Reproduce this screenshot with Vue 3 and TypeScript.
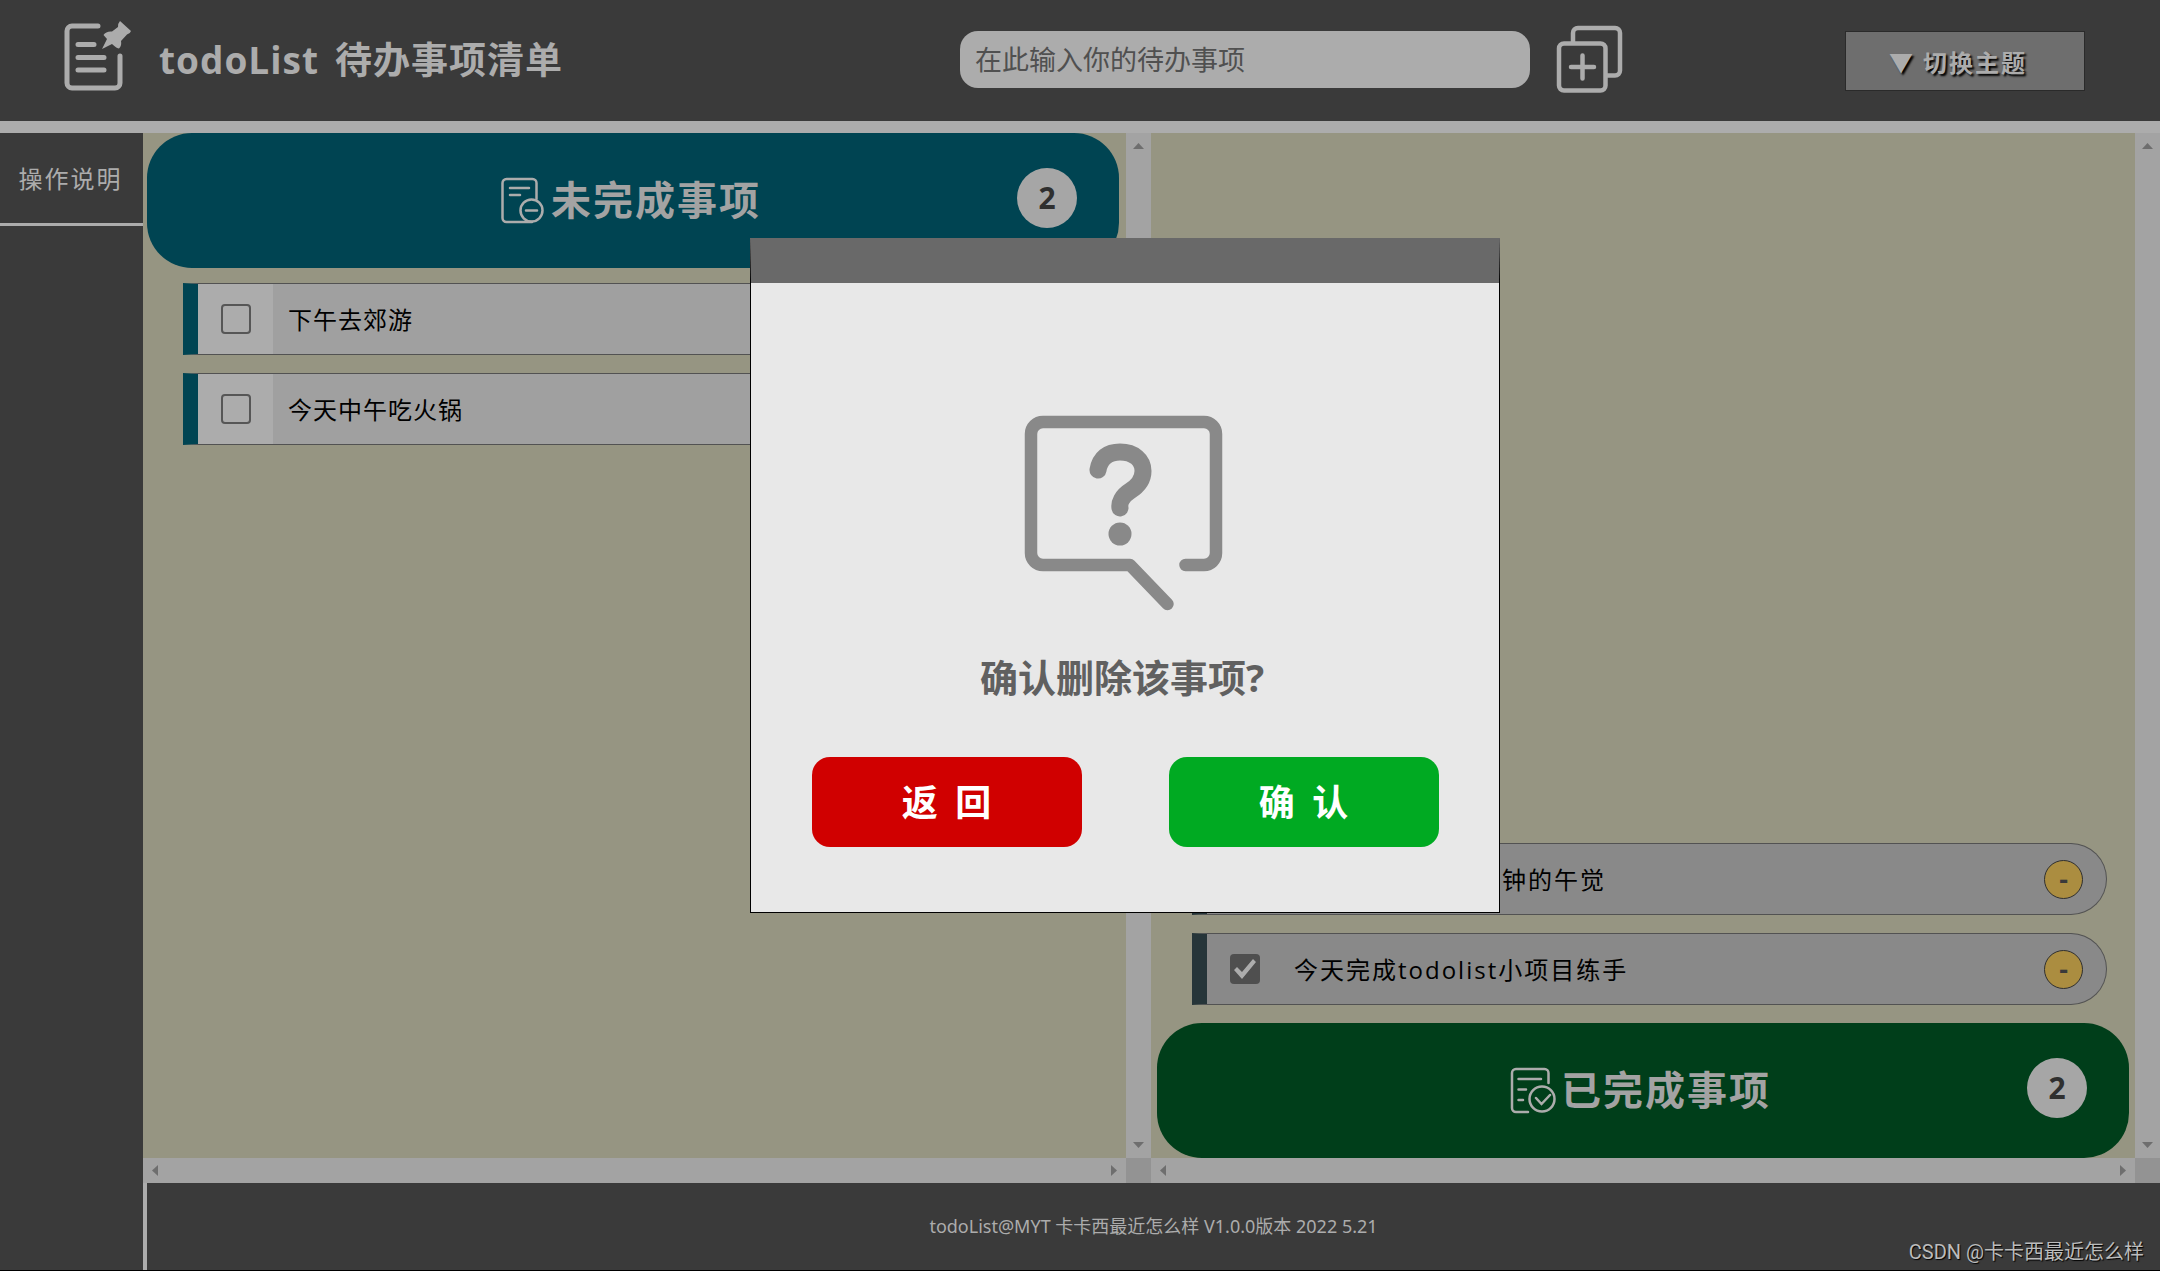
<script setup lang="ts">
import { computed, ref } from 'vue'

interface Todo {
  id: number
  text: string
  done: boolean
}

const draft = ref('')
const todos = ref<Todo[]>([
  { id: 1, text: '下午去郊游', done: false },
  { id: 2, text: '今天中午吃火锅', done: false },
  { id: 3, text: '今天中午睡三十分钟的午觉', done: true },
  { id: 4, text: '今天完成todolist小项目练手', done: true },
])
const pendingId = ref<number | null>(3)

const open = computed(() => todos.value.filter((t) => !t.done))
const finished = computed(() => todos.value.filter((t) => t.done))

function addTodo() {
  const text = draft.value.trim()
  if (!text) return
  todos.value.push({ id: Date.now(), text, done: false })
  draft.value = ''
}

function confirmDelete() {
  todos.value = todos.value.filter((t) => t.id !== pendingId.value)
  pendingId.value = null
}
</script>

<template>
  <div class="page">
    <header class="top">
      <div class="brand">
        <svg class="logo" viewBox="0 0 70 74" aria-hidden="true">
          <g fill="none" stroke="currentColor" stroke-width="5" stroke-linecap="round">
            <path d="M35 7H9a5 5 0 0 0-5 5V64a5 5 0 0 0 5 5H52a5 5 0 0 0 5-5V37" />
            <path d="M15 25.500H31M15 38.500H41M15 51H41" />
          </g>
          <path
            fill="currentColor"
            d="M57 2 68 12Q67 15 64 15.500L58 22Q59 27 56 29.500Q54 29.500 49 25L39 30 44 20 40.500 16Q43 12 49 12.500L55 8Q55 4 57 2Z"
          />
        </svg>
        <h1><span>todoList</span> <span>待办事项清单</span></h1>
      </div>
      <form class="entry" @submit.prevent="addTodo">
        <input
          v-model="draft"
          class="entry-input"
          type="text"
          placeholder="在此输入你的待办事项"
          aria-label="待办事项"
        />
        <button class="add" type="submit" aria-label="添加">
          <svg viewBox="0 0 70 72" aria-hidden="true">
            <g fill="none" stroke="currentColor" stroke-width="4.500" stroke-linecap="round">
              <path stroke-linecap="butt" d="M18 18V9a5 5 0 0 1 5-5H60a5 5 0 0 1 5 5V46.500a5 5 0 0 1-5 5H52" />
              <rect x="4" y="19.500" width="46.500" height="47" rx="5" />
              <path d="M27.500 31.500V54.500M16 43H39" />
            </g>
          </svg>
        </button>
      </form>
      <button class="theme" type="button">▼ 切换主题</button>
    </header>

    <div class="body">
      <nav class="side">
        <a class="side-link" href="#help">操作说明</a>
      </nav>

      <div class="content">
        <main class="panels">
          <section class="panel">
            <div class="pane">
              <div class="bar bar-open">
                <svg class="bar-icon" viewBox="0 0 48 50" aria-hidden="true">
                  <g fill="none" stroke="currentColor" stroke-width="2.500" stroke-linecap="round">
                    <path d="M37.500 23V7a4 4 0 0 0-4-4H7.500a4 4 0 0 0-4 4V42a4 4 0 0 0 4 4H33" />
                    <circle cx="32.500" cy="34.500" r="11" />
                    <path d="M11 12H30M11 19H21M27 34.500H38" />
                  </g>
                </svg>
                <h2>未完成事项</h2>
                <span class="count">{{ open.length }}</span>
              </div>
              <ul class="list">
                <li v-for="t in open" :key="t.id" class="item">
                  <label class="tick"><input v-model="t.done" type="checkbox" :aria-label="t.text" /></label>
                  <span class="text">{{ t.text }}</span>
                  <button class="del" type="button" aria-label="删除" @click="pendingId = t.id">-</button>
                </li>
              </ul>
            </div>
            <div class="scroll scroll-y" aria-hidden="true"><i class="up"></i><i class="down"></i></div>
            <div class="scroll scroll-x" aria-hidden="true"><i class="left"></i><i class="right"></i></div>
            <div class="corner"></div>
          </section>

          <section class="panel">
            <div class="pane pane-end">
              <ul class="list">
                <li v-for="t in finished" :key="t.id" class="item item-done">
                  <label class="tick"><input v-model="t.done" type="checkbox" :aria-label="t.text" /></label>
                  <span class="text">{{ t.text }}</span>
                  <button class="del" type="button" aria-label="删除" @click="pendingId = t.id">-</button>
                </li>
              </ul>
              <div class="bar bar-done">
                <svg class="bar-icon" viewBox="0 0 48 50" aria-hidden="true">
                  <g fill="none" stroke="currentColor" stroke-width="2.500" stroke-linecap="round">
                    <path d="M39.500 17V7a4 4 0 0 0-4-4H7a4 4 0 0 0-4 4V42a4 4 0 0 0 4 4H19" />
                    <circle cx="33" cy="33" r="12.500" />
                    <path d="M9.500 13H32M9.500 23.500H17M9.500 34H14M27 32l5.500 6L41 29" />
                  </g>
                </svg>
                <h2>已完成事项</h2>
                <span class="count">{{ finished.length }}</span>
              </div>
            </div>
            <div class="scroll scroll-y" aria-hidden="true"><i class="up"></i><i class="down"></i></div>
            <div class="scroll scroll-x" aria-hidden="true"><i class="left"></i><i class="right"></i></div>
            <div class="corner"></div>
          </section>
        </main>

        <footer class="foot">todoList@MYT 卡卡西最近怎么样 V1.0.0版本 2022 5.21</footer>
      </div>
    </div>

    <div v-if="pendingId !== null" class="dialog" role="dialog" aria-modal="true" aria-labelledby="ask">
      <svg class="ask-icon" viewBox="0 0 200 200" aria-hidden="true">
        <g fill="none" stroke="currentColor" stroke-linecap="round" stroke-linejoin="round">
          <path
            stroke-width="12.500"
            d="M161.500 150H180a12 12 0 0 0 12-12V19a12 12 0 0 0-12-12H19a12 12 0 0 0-12 12V138a12 12 0 0 0 12 12H106L143.500 189"
          />
          <path stroke-width="17" d="M74 55C76 43 84 37 96 37C110 37 119 45 119 56C119 65 114 71 106 76C98 81 95 88 96 93" />
        </g>
        <circle cx="96" cy="119" r="11.500" fill="currentColor" />
      </svg>
      <p id="ask" class="ask">确认删除该事项?</p>
      <div class="actions">
        <button class="btn btn-back" type="button" @click="pendingId = null">返 回</button>
        <button class="btn btn-ok" type="button" @click="confirmDelete">确 认</button>
      </div>
    </div>

    <span class="mark">CSDN @卡卡西最近怎么样</span>
  </div>
</template>

<style>
body {
  margin: 0;
  background: #3a3a3a;
}
</style>

<style scoped>
* {
  box-sizing: border-box;
}

.page {
  position: relative;
  display: flex;
  flex-direction: column;
  min-height: 100vh;
  border-bottom: 1px solid #000;
  background: #3a3a3a;
  color: #acacac;
  font-family: 'Open Sans', 'Noto Sans CJK SC', sans-serif;
}

button,
input {
  margin: 0;
  font-family: inherit;
}

h1,
h2,
p,
ul {
  margin: 0;
  padding: 0;
}

.top {
  display: grid;
  grid-template-columns: 960px 1fr auto;
  align-items: center;
  height: 133px;
  padding: 0 75px 2px 0;
  border-bottom: 12px solid #acacac;
}

.brand {
  display: flex;
  align-items: center;
  gap: 26px;
  padding-left: 63px;
}

.logo {
  width: 70px;
  height: 74px;
  margin-bottom: 8px;
}

h1 {
  display: flex;
  gap: 16px;
  font-size: 37px;
  line-height: 48px;
  letter-spacing: 1px;
  white-space: nowrap;
}

.entry {
  display: flex;
  align-items: center;
  gap: 25px;
}

.entry-input {
  width: 570px;
  height: 57px;
  padding: 0 15px;
  border: 0;
  border-radius: 18px;
  background: #acacac;
  color: #000;
  font-size: 27px;
}

.entry-input::placeholder {
  color: #505050;
  opacity: 1;
}

.add {
  width: 70px;
  height: 72px;
  padding: 0;
  border: 0;
  background: none;
  color: #acacac;
}

.add svg {
  display: block;
}

.theme {
  width: 240px;
  height: 60px;
  margin-top: 2px;
  padding: 2px 14px 0 0;
  border: 1px solid #2a2a2a;
  background: #6e6e6e;
  color: #acacac;
  font-size: 24px;
  font-weight: 700;
  letter-spacing: 2px;
  text-shadow: 2px 2px 2px #000;
}

.body {
  display: flex;
  flex: 1;
}

.side {
  width: 143px;
}

.side-link {
  display: flex;
  align-items: center;
  justify-content: center;
  height: 93px;
  padding: 0 2px 2px 0;
  border-bottom: 3px solid #acacac;
  color: #acacac;
  font-size: 24px;
  letter-spacing: 2px;
  text-decoration: none;
}

.content {
  display: flex;
  flex: 1;
  flex-direction: column;
}

.panels {
  display: grid;
  flex: 1;
  grid-template-columns: 1008fr 1009fr;
}

.panel {
  display: grid;
  grid-template-columns: 1fr 25px;
  grid-template-rows: 1fr 25px;
}

.pane {
  display: flex;
  flex-direction: column;
  padding: 0 7px 0 4px;
  background: #969582;
}

.pane-end {
  justify-content: flex-end;
  padding: 0 6px;
}

.bar {
  position: relative;
  display: flex;
  align-items: center;
  justify-content: center;
  gap: 4px;
  height: 135px;
  padding-right: 6px;
  border-radius: 45px;
  color: #a3a3a3;
}

.bar-open {
  background: #004452;
}

.bar-done {
  background: #003e1a;
}

.bar-icon {
  width: 48px;
  height: 50px;
  color: #acacac;
}

h2 {
  padding-bottom: 2px;
  font-size: 40px;
  line-height: 60px;
  letter-spacing: 2px;
}

.count {
  position: absolute;
  top: 35px;
  right: 42px;
  width: 60px;
  height: 60px;
  border-radius: 50%;
  background: #a6a6a6;
  color: #2f2f2f;
  font-size: 30px;
  font-weight: 700;
  line-height: 60px;
  text-align: center;
}

.list {
  display: flex;
  flex-direction: column;
  gap: 18px;
  padding: 15px 22px 18px 36px;
  list-style: none;
}

.pane-end .list {
  padding-left: 35px;
}

.item {
  display: flex;
  align-items: center;
  height: 72px;
  padding-right: 23px;
  border: 1px solid #525252;
  border-left: 15px solid #004452;
  border-radius: 0 36px 36px 0;
  background: #a0a0a0;
  color: #000;
}

.item-done {
  border-left-color: #263539;
  background: #898989;
}

.tick {
  display: flex;
  align-items: center;
  width: 75px;
  height: 70px;
  padding-left: 23px;
  background: #acacac;
}

.item-done .tick {
  background: none;
}

.tick input {
  display: block;
  width: 30px;
  height: 30px;
  margin: 0;
  border: 2px solid #565656;
  border-radius: 4px;
  appearance: none;
}

.tick input:checked {
  border: 0;
  background: #4f4f4f;
}

.tick input:checked::after {
  display: block;
  width: 30px;
  height: 30px;
  background: #acacac;
  clip-path: polygon(4px 16px, 7px 13px, 12px 18px, 23px 5px, 26px 8px, 12px 25px);
  content: '';
}

.text {
  flex: 1;
  padding-bottom: 2px;
  padding-left: 15px;
  font-size: 24px;
  letter-spacing: 1px;
}

.item-done .text {
  padding-left: 12px;
  letter-spacing: 2px;
}

.del {
  width: 39px;
  height: 39px;
  padding: 0;
  border: 1px solid #2f2f2f;
  border-radius: 50%;
  background: #ab8d40;
  color: #3a3a3a;
  font-size: 27px;
  font-weight: 700;
  line-height: 36px;
}

.scroll {
  display: flex;
  align-items: center;
  justify-content: space-between;
  background: #a3a3a3;
}

.scroll-y {
  flex-direction: column;
  padding: 10px 0;
}

.scroll-x {
  padding: 0 9px;
}

.scroll i {
  background: #6e6e6e;
}

.up,
.down {
  width: 11px;
  height: 6px;
}

.left,
.right {
  width: 6px;
  height: 11px;
}

.up {
  clip-path: polygon(50% 0, 100% 100%, 0 100%);
}

.down {
  clip-path: polygon(0 0, 100% 0, 50% 100%);
}

.left {
  clip-path: polygon(100% 0, 100% 100%, 0 50%);
}

.right {
  clip-path: polygon(0 0, 100% 50%, 0 100%);
}

.corner {
  background: #939393;
}

.foot {
  height: 87px;
  border-left: 4px solid #acacac;
  font-family: 'Noto Sans', 'Noto Sans CJK SC', sans-serif;
  font-size: 18px;
  line-height: 87px;
  text-align: center;
}

.dialog {
  position: absolute;
  top: 238px;
  left: 50%;
  display: flex;
  flex-direction: column;
  align-items: center;
  width: 750px;
  height: 675px;
  margin-left: -330px;
  border: 1px solid #000;
  border-top: 45px solid #696969;
  background: #e8e8e8;
}

.ask-icon {
  width: 200px;
  height: 200px;
  margin: 132px 2px 0 0;
  color: #898989;
}

.ask {
  margin-top: 34px;
  padding-right: 6px;
  color: #606060;
  font-size: 38px;
  font-weight: 700;
  line-height: 56px;
}

.actions {
  display: flex;
  gap: 87px;
  margin-top: 52px;
}

.btn {
  width: 270px;
  height: 90px;
  padding: 0 0 4px 4px;
  border: 0;
  border-radius: 18px;
  color: #fff;
  font-size: 36px;
  font-weight: 700;
  letter-spacing: 4px;
}

.btn-back {
  background: #d00000;
}

.btn-ok {
  background: #00aa22;
}

.mark {
  position: absolute;
  right: 16px;
  bottom: 3px;
  color: #bcbcbc;
  font-family: Roboto, 'Noto Sans CJK SC', sans-serif;
  font-size: 20px;
  line-height: 30px;
  text-shadow: 1px 1px 1px #000;
}
</style>
